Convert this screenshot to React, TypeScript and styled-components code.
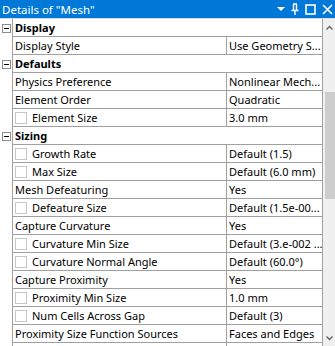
import React from "react";
import styled, {createGlobalStyle} from "styled-components";

const GlobalStyle = createGlobalStyle`
  html, body {
    margin: 0;
    padding: 0;
    background: white;
    overflow: hidden;
  }
  body {
    font-family: "Noto Sans", "Open Sans", sans-serif;
    font-size: 11px;
    color: #000;
  }
`

type Row =
    | { kind: 'header', name: string }
    | { kind: 'prop', name: string, value: string, check?: boolean }

const rows: Row[] = [
    {kind: 'header', name: 'Display'},
    {kind: 'prop', name: 'Display Style', value: 'Use Geometry S...'},
    {kind: 'header', name: 'Defaults'},
    {kind: 'prop', name: 'Physics Preference', value: 'Nonlinear Mech...'},
    {kind: 'prop', name: 'Element Order', value: 'Quadratic'},
    {kind: 'prop', name: 'Element Size', value: '3.0 mm', check: true},
    {kind: 'header', name: 'Sizing'},
    {kind: 'prop', name: 'Growth Rate', value: 'Default (1.5)', check: true},
    {kind: 'prop', name: 'Max Size', value: 'Default (6.0 mm)', check: true},
    {kind: 'prop', name: 'Mesh Defeaturing', value: 'Yes'},
    {kind: 'prop', name: 'Defeature Size', value: 'Default (1.5e-00...', check: true},
    {kind: 'prop', name: 'Capture Curvature', value: 'Yes'},
    {kind: 'prop', name: 'Curvature Min Size', value: 'Default (3.e-002 ...', check: true},
    {kind: 'prop', name: 'Curvature Normal Angle', value: 'Default (60.0°)', check: true},
    {kind: 'prop', name: 'Capture Proximity', value: 'Yes'},
    {kind: 'prop', name: 'Proximity Min Size', value: '1.0 mm', check: true},
    {kind: 'prop', name: 'Num Cells Across Gap', value: 'Default (3)', check: true},
    {kind: 'prop', name: 'Proximity Size Function Sources', value: 'Faces and Edges'},
    {kind: 'prop', name: '', value: ''},
]

const Panel = styled.div`
  width: 335px;
  height: 346px;
  overflow: hidden;
  display: flex;
  flex-direction: column;
`

const TitleBar = styled.div`
  height: 18px;
  flex-shrink: 0;
  background: #0078d7;
  color: white;
  display: flex;
  align-items: center;
  padding-left: 2px;
  font-size: 11.5px;
  white-space: nowrap;
`

const Grip = styled.div`
  flex: 1;
  height: 10px;
  margin: 0 6px 0 6px;
  background-image: radial-gradient(circle, #5fa8e6 0.6px, transparent 0.7px);
  background-size: 2px 2px;
`

const TitleButtons = styled.div`
  display: flex;
  align-items: center;
  gap: 6px;
  padding-right: 2px;
`

const Body = styled.div`
  flex: 1;
  display: flex;
  border-top: 1px solid #dcdcdc;
  min-height: 0;
`

const Grid = styled.div`
  width: 323px;
  flex-shrink: 0;
  overflow: hidden;
`

const RowBox = styled.div`
  display: flex;
  height: 18px;
`

const Gutter = styled.div`
  width: 12px;
  flex-shrink: 0;
  display: flex;
  align-items: center;
  padding-left: 2px;
  box-sizing: border-box;
`

const Toggle = styled.div`
  width: 9px;
  height: 9px;
  box-sizing: border-box;
  border: 1px solid #8c8c8c;
  background: white;
  display: flex;
  align-items: center;
  justify-content: center;

  &::after {
    content: '';
    width: 5px;
    height: 1px;
    background: #000;
  }
`

const Cells = styled.div`
  flex: 1;
  display: flex;
  border-left: 1px solid #a0a0a0;
  border-right: 1px solid #a0a0a0;
  border-bottom: 1px solid #a0a0a0;
  min-width: 0;
`

const NameCell = styled.div<{ $bold?: boolean, $full?: boolean }>`
  ${p => p.$full ? 'flex: 1;' : 'width: 213px;'}
  flex-shrink: 0;
  display: flex;
  align-items: center;
  padding-left: 2px;
  box-sizing: border-box;
  white-space: nowrap;
  overflow: hidden;
  font-weight: ${p => p.$bold ? 700 : 400};
`

const CheckBox = styled.div`
  width: 12px;
  height: 12px;
  box-sizing: border-box;
  border: 1px solid #c6c6c6;
  background: white;
  margin-right: 5px;
  flex-shrink: 0;
`

const ValueCell = styled.div`
  flex: 1;
  display: flex;
  align-items: center;
  border-left: 1px solid #a0a0a0;
  padding-left: 2px;
  white-space: nowrap;
  overflow: hidden;
  min-width: 0;
`

const Scrollbar = styled.div`
  flex: 1;
  background: #f0f0f0;
  display: flex;
  flex-direction: column;
  align-items: center;
  position: relative;
`

const Arrow = styled.div`
  height: 16px;
  display: flex;
  align-items: center;
  justify-content: center;
`

const Thumb = styled.div`
  position: absolute;
  left: 2px;
  right: 0;
  top: 73px;
  height: 107px;
  background: #cdcdcd;
`

function Chevron({up}: { up?: boolean }) {
    return (
        <svg width="7" height="5" viewBox="0 0 7 5">
            <path d={up ? "M0.5 4.5 L3.5 1.5 L6.5 4.5" : "M0.5 0.5 L3.5 3.5 L6.5 0.5"} fill="none" stroke="#606060"
                  strokeWidth="1.3"/>
        </svg>
    )
}

function App() {
    return (
        <Panel>
            <GlobalStyle/>
            <TitleBar>
                <span>Details of "Mesh"</span>
                <Grip/>
                <TitleButtons>
                    <svg width="8" height="6" viewBox="0 0 8 6">
                        <path d="M0 1 L8 1 L4 5 Z" fill="white"/>
                    </svg>
                    <svg width="8" height="12" viewBox="0 0 8 12">
                        <path d="M2 1 H6 M2.5 1 V7 M5.5 1 V7 M0.5 7.5 H7.5 M4 7.5 V12" fill="none" stroke="white"
                              strokeWidth="1.4"/>
                    </svg>
                    <svg width="11" height="11" viewBox="0 0 11 11">
                        <rect x="1" y="1" width="9" height="9" fill="none" stroke="white" strokeWidth="1.6"/>
                    </svg>
                    <svg width="11" height="11" viewBox="0 0 11 11">
                        <path d="M1 1 L10 10 M10 1 L1 10" stroke="white" strokeWidth="1.6"/>
                    </svg>
                </TitleButtons>
            </TitleBar>
            <Body>
                <Grid>
                    {rows.map((row, i) => {
                        if (row.kind === 'header') {
                            return (
                                <RowBox key={i}>
                                    <Gutter><Toggle/></Gutter>
                                    <Cells>
                                        <NameCell $bold $full>{row.name}</NameCell>
                                    </Cells>
                                </RowBox>
                            )
                        }
                        return (
                            <RowBox key={i}>
                                <Gutter/>
                                <Cells>
                                    <NameCell>
                                        {row.check && <CheckBox/>}
                                        {row.name}
                                    </NameCell>
                                    <ValueCell>{row.value}</ValueCell>
                                </Cells>
                            </RowBox>
                        )
                    })}
                </Grid>
                <Scrollbar>
                    <Arrow><Chevron up/></Arrow>
                    <Thumb/>
                    <div style={{flex: 1}}/>
                    <Arrow><Chevron/></Arrow>
                </Scrollbar>
            </Body>
        </Panel>
    )
}

export default App
